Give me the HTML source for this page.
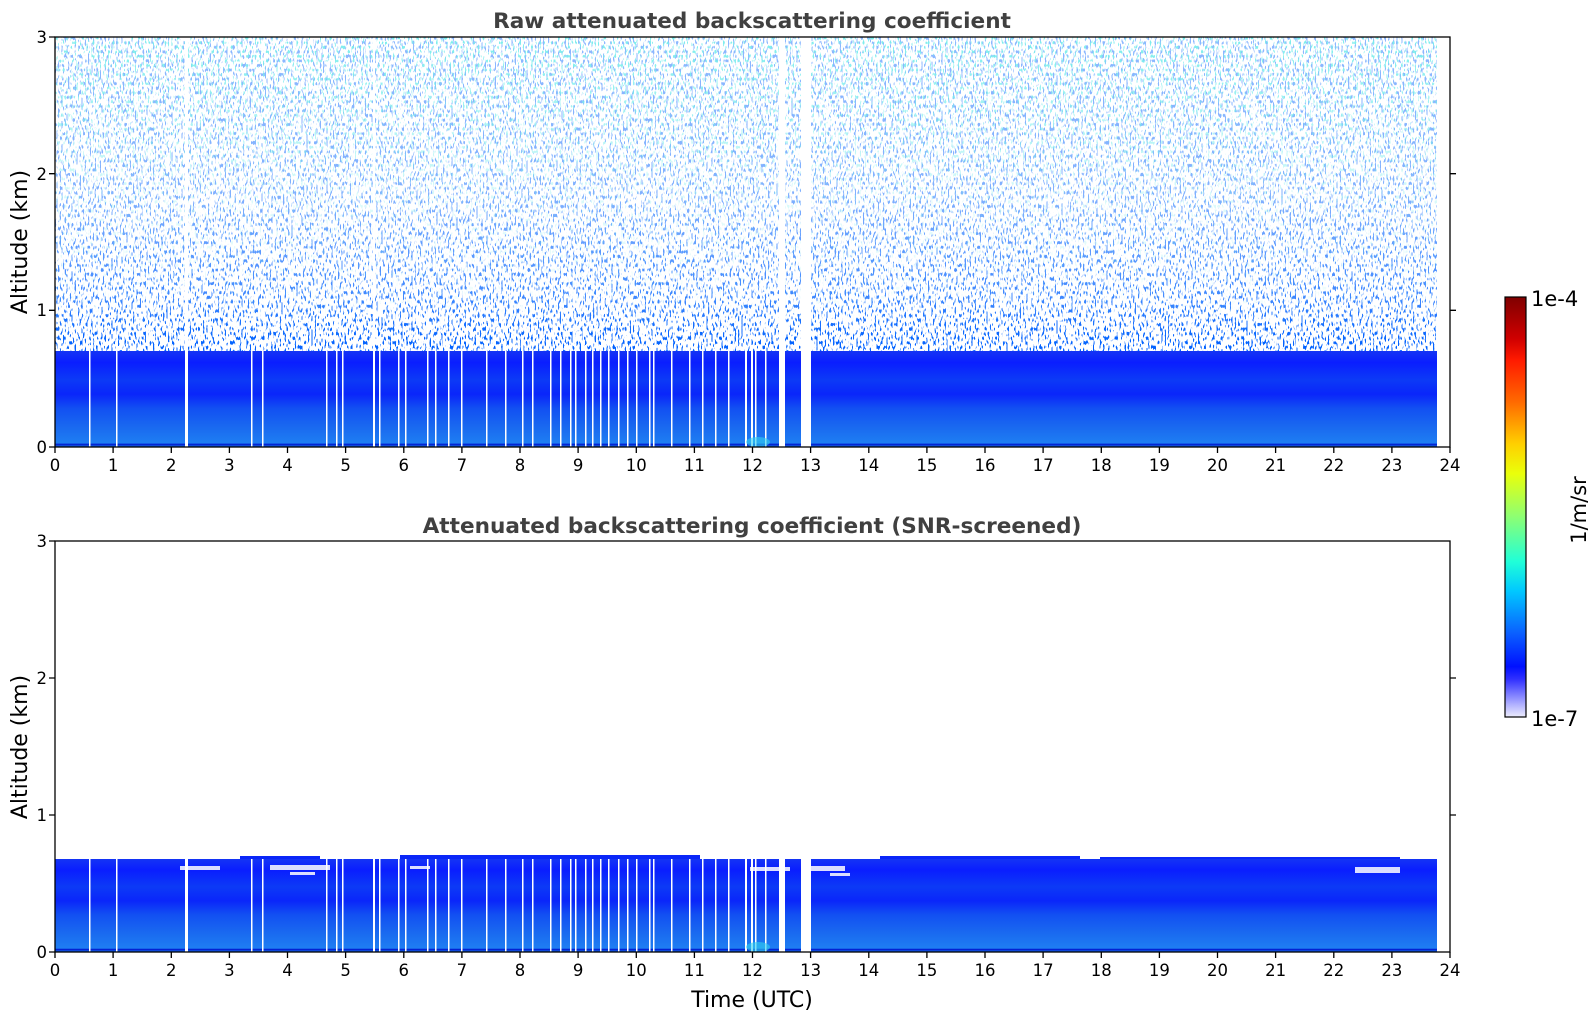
<!DOCTYPE html>
<html><head><meta charset="utf-8"><style>
html,body{margin:0;padding:0;background:#fff;}
svg{display:block;font-family:"DejaVu Sans","Liberation Sans",sans-serif;}
</style></head><body>
<svg width="1595" height="1020" viewBox="0 0 1595 1020" xmlns="http://www.w3.org/2000/svg">
<defs>
<filter id="nz" x="0" y="0" width="100%" height="100%">
<feTurbulence type="fractalNoise" baseFrequency="0.6 0.22" numOctaves="1" seed="4"/>
<feColorMatrix type="matrix" values="0 0 0 0 0.0  0 0 0 0 0.12  0 0 0 0 1  14 0 0 0 -7.9"/>
</filter>
<filter id="nz2" x="0" y="0" width="100%" height="100%">
<feTurbulence type="fractalNoise" baseFrequency="0.6 0.22" numOctaves="1" seed="11"/>
<feColorMatrix type="matrix" values="0 0 0 0 0.2  0 0 0 0 0.85  0 0 0 0 0.85  14 0 0 0 -8.4"/>
</filter>
<linearGradient id="mg" x1="0" y1="0" x2="0" y2="1">
<stop offset="0" stop-color="#fff" stop-opacity="0.45"/>
<stop offset="0.5" stop-color="#fff" stop-opacity="0.5"/>
<stop offset="0.8" stop-color="#fff" stop-opacity="0.75"/>
<stop offset="1" stop-color="#fff" stop-opacity="1"/>
</linearGradient>
<linearGradient id="mg2" x1="0" y1="0" x2="0" y2="1">
<stop offset="0" stop-color="#fff" stop-opacity="1"/>
<stop offset="0.5" stop-color="#fff" stop-opacity="0.3"/>
<stop offset="1" stop-color="#fff" stop-opacity="0"/>
</linearGradient>
<linearGradient id="mg3" x1="0" y1="0" x2="0" y2="1">
<stop offset="0" stop-color="#fff" stop-opacity="0"/>
<stop offset="0.85" stop-color="#fff" stop-opacity="0"/>
<stop offset="1" stop-color="#fff" stop-opacity="1"/>
</linearGradient>
<mask id="m1"><rect x="55" y="37" width="1382" height="320" fill="url(#mg)"/></mask>
<mask id="m2"><rect x="55" y="37" width="1382" height="320" fill="url(#mg2)"/></mask>
<mask id="m3"><rect x="55" y="37" width="1382" height="320" fill="url(#mg3)"/></mask>
<linearGradient id="band" x1="0" y1="0" x2="0" y2="1">
<stop offset="0" stop-color="#1434f4"/>
<stop offset="0.12" stop-color="#0a1eff"/>
<stop offset="0.3" stop-color="#0c3af6"/>
<stop offset="0.45" stop-color="#0a26fa"/>
<stop offset="0.6" stop-color="#1250f2"/>
<stop offset="0.8" stop-color="#1a6af0"/>
<stop offset="0.96" stop-color="#1e7ef2"/>
<stop offset="0.97" stop-color="#0018d0"/>
<stop offset="1" stop-color="#1c7ae8"/>
</linearGradient>
<linearGradient id="cb" x1="0" y1="0" x2="0" y2="1">
<stop offset="0" stop-color="#7f0000"/>
<stop offset="0.1" stop-color="#d00000"/>
<stop offset="0.15" stop-color="#ff1a00"/>
<stop offset="0.25" stop-color="#ff6a00"/>
<stop offset="0.35" stop-color="#ffd000"/>
<stop offset="0.42" stop-color="#eaff0a"/>
<stop offset="0.52" stop-color="#90ff70"/>
<stop offset="0.63" stop-color="#20ffd8"/>
<stop offset="0.7" stop-color="#00c8ff"/>
<stop offset="0.8" stop-color="#0a60ff"/>
<stop offset="0.88" stop-color="#0010ff"/>
<stop offset="0.91" stop-color="#3030ff"/>
<stop offset="0.94" stop-color="#7070ff"/>
<stop offset="0.97" stop-color="#b0b0ff"/>
<stop offset="1" stop-color="#ececfc"/>
</linearGradient>
</defs>

<!-- TOP PLOT -->
<g>
<rect x="55" y="37" width="1382" height="320" filter="url(#nz)" mask="url(#m1)"/>
<rect x="55" y="37" width="1382" height="320" filter="url(#nz)" mask="url(#m3)"/>
<rect x="55" y="37" width="1382" height="320" filter="url(#nz2)" mask="url(#m2)"/>
<rect x="55" y="351" width="1382" height="96" fill="url(#band)"/>
<g fill="#fff">
<rect x="89" y="345" width="1.5" height="102"/><rect x="116" y="345" width="1.5" height="102"/>
<rect x="185" y="37" width="3" height="410"/><rect x="251" y="345" width="1.5" height="102"/>
<rect x="262" y="345" width="1.5" height="102"/><rect x="326" y="345" width="1.5" height="102"/>
<rect x="336" y="345" width="1.5" height="102"/><rect x="342" y="345" width="1.5" height="102"/>
<rect x="373" y="37" width="2" height="410"/><rect x="379" y="345" width="1.5" height="102"/>
<rect x="398" y="345" width="1.5" height="102"/><rect x="405" y="345" width="1.5" height="102"/>
<rect x="427" y="345" width="1.5" height="102"/><rect x="435" y="345" width="1.5" height="102"/>
<rect x="448" y="345" width="1.5" height="102"/><rect x="461" y="345" width="1.5" height="102"/>
<rect x="486" y="345" width="1.5" height="102"/><rect x="505" y="345" width="1.5" height="102"/>
<rect x="522" y="345" width="1.5" height="102"/><rect x="532" y="345" width="1.5" height="102"/>
<rect x="550" y="345" width="1.5" height="102"/><rect x="560" y="345" width="1.5" height="102"/>
<rect x="570" y="345" width="1.5" height="102"/><rect x="575" y="345" width="1.5" height="102"/>
<rect x="585" y="345" width="1.5" height="102"/><rect x="592" y="345" width="1.5" height="102"/>
<rect x="600" y="345" width="1.5" height="102"/><rect x="608" y="345" width="1.5" height="102"/>
<rect x="618" y="345" width="1.5" height="102"/><rect x="627" y="345" width="1.5" height="102"/>
<rect x="636" y="345" width="1.5" height="102"/><rect x="649" y="345" width="1.5" height="102"/>
<rect x="653" y="345" width="1.5" height="102"/><rect x="671" y="345" width="1.5" height="102"/>
<rect x="689" y="345" width="1.5" height="102"/><rect x="702" y="345" width="1.5" height="102"/>
<rect x="715" y="345" width="1.5" height="102"/><rect x="728" y="345" width="1.5" height="102"/>
<rect x="745" y="345" width="2" height="102"/><rect x="751" y="345" width="2" height="102"/>
<rect x="755" y="345" width="1.5" height="102"/><rect x="765" y="345" width="1.5" height="102"/>
<rect x="779" y="37" width="6" height="410"/><rect x="801" y="37" width="10" height="410"/>
</g>
<ellipse cx="758" cy="442" rx="12" ry="5" fill="#30d0f0" opacity="0.6"/>
</g>

<!-- BOTTOM PLOT -->
<g>
<rect x="55" y="859" width="1382" height="93" fill="url(#band)"/>
<g fill="#0a26f8">
<rect x="240" y="856" width="80" height="3"/><rect x="400" y="855" width="300" height="4"/><rect x="880" y="856" width="200" height="3"/><rect x="1100" y="857" width="300" height="2"/>
</g>
<g fill="#fff" opacity="0.85">
<rect x="180" y="866" width="40" height="4"/><rect x="270" y="865" width="60" height="5"/><rect x="290" y="872" width="25" height="3"/><rect x="410" y="866" width="20" height="3"/>
<rect x="750" y="867" width="40" height="4"/><rect x="810" y="866" width="35" height="5"/><rect x="830" y="873" width="20" height="3"/>
<rect x="1355" y="867" width="45" height="6"/>
</g>
<g fill="#fff">
<rect x="89" y="859" width="1.5" height="93"/><rect x="116" y="859" width="1.5" height="93"/>
<rect x="185" y="859" width="3" height="93"/><rect x="251" y="859" width="1.5" height="93"/>
<rect x="262" y="859" width="1.5" height="93"/><rect x="326" y="859" width="1.5" height="93"/>
<rect x="336" y="859" width="1.5" height="93"/><rect x="342" y="859" width="1.5" height="93"/>
<rect x="373" y="859" width="2" height="93"/><rect x="379" y="859" width="1.5" height="93"/>
<rect x="398" y="859" width="1.5" height="93"/><rect x="405" y="859" width="1.5" height="93"/>
<rect x="427" y="859" width="1.5" height="93"/><rect x="435" y="859" width="1.5" height="93"/>
<rect x="448" y="859" width="1.5" height="93"/><rect x="461" y="859" width="1.5" height="93"/>
<rect x="486" y="859" width="1.5" height="93"/><rect x="505" y="859" width="1.5" height="93"/>
<rect x="522" y="859" width="1.5" height="93"/><rect x="532" y="859" width="1.5" height="93"/>
<rect x="550" y="859" width="1.5" height="93"/><rect x="560" y="859" width="1.5" height="93"/>
<rect x="570" y="859" width="1.5" height="93"/><rect x="575" y="859" width="1.5" height="93"/>
<rect x="585" y="859" width="1.5" height="93"/><rect x="592" y="859" width="1.5" height="93"/>
<rect x="600" y="859" width="1.5" height="93"/><rect x="608" y="859" width="1.5" height="93"/>
<rect x="618" y="859" width="1.5" height="93"/><rect x="627" y="859" width="1.5" height="93"/>
<rect x="636" y="859" width="1.5" height="93"/><rect x="649" y="859" width="1.5" height="93"/>
<rect x="653" y="859" width="1.5" height="93"/><rect x="671" y="859" width="1.5" height="93"/>
<rect x="689" y="859" width="1.5" height="93"/><rect x="702" y="859" width="1.5" height="93"/>
<rect x="715" y="859" width="1.5" height="93"/><rect x="728" y="859" width="1.5" height="93"/>
<rect x="745" y="859" width="2" height="93"/><rect x="751" y="859" width="2" height="93"/>
<rect x="755" y="859" width="1.5" height="93"/><rect x="765" y="859" width="1.5" height="93"/>
<rect x="779" y="855" width="6" height="97"/><rect x="801" y="855" width="10" height="97"/>
</g>
<ellipse cx="758" cy="947" rx="12" ry="5" fill="#30d0f0" opacity="0.6"/>
</g>

<!-- AXES -->
<g fill="none" stroke="#000" stroke-width="1.3">
<rect x="55" y="37" width="1395" height="410"/>
<rect x="55" y="541" width="1395" height="411"/>
<path d="M55 447v6M113.1 447v6M171.3 447v6M229.4 447v6M287.5 447v6M345.6 447v6M403.8 447v6M461.9 447v6M520 447v6M578.1 447v6M636.3 447v6M694.4 447v6M752.5 447v6M810.6 447v6M868.8 447v6M926.9 447v6M985 447v6M1043.1 447v6M1101.3 447v6M1159.4 447v6M1217.5 447v6M1275.6 447v6M1333.8 447v6M1391.9 447v6M1450 447v6"/>
<path d="M55 952v6M113.1 952v6M171.3 952v6M229.4 952v6M287.5 952v6M345.6 952v6M403.8 952v6M461.9 952v6M520 952v6M578.1 952v6M636.3 952v6M694.4 952v6M752.5 952v6M810.6 952v6M868.8 952v6M926.9 952v6M985 952v6M1043.1 952v6M1101.3 952v6M1159.4 952v6M1217.5 952v6M1275.6 952v6M1333.8 952v6M1391.9 952v6M1450 952v6"/>
<path d="M49 447h6M49 310.3h6M49 173.7h6M49 37h6M1450 310.3h6M1450 173.7h6"/>
<path d="M49 952h6M49 815h6M49 678h6M49 541h6M1450 815h6M1450 678h6"/>
</g>
<g font-size="16.5" text-anchor="middle" fill="#000">
<text x="55" y="471">0</text><text x="113.1" y="471">1</text><text x="171.3" y="471">2</text><text x="229.4" y="471">3</text><text x="287.5" y="471">4</text><text x="345.6" y="471">5</text><text x="403.8" y="471">6</text><text x="461.9" y="471">7</text><text x="520" y="471">8</text><text x="578.1" y="471">9</text><text x="636.3" y="471">10</text><text x="694.4" y="471">11</text><text x="752.5" y="471">12</text><text x="810.6" y="471">13</text><text x="868.8" y="471">14</text><text x="926.9" y="471">15</text><text x="985" y="471">16</text><text x="1043.1" y="471">17</text><text x="1101.3" y="471">18</text><text x="1159.4" y="471">19</text><text x="1217.5" y="471">20</text><text x="1275.6" y="471">21</text><text x="1333.8" y="471">22</text><text x="1391.9" y="471">23</text><text x="1450" y="471">24</text>
<text x="55" y="976">0</text><text x="113.1" y="976">1</text><text x="171.3" y="976">2</text><text x="229.4" y="976">3</text><text x="287.5" y="976">4</text><text x="345.6" y="976">5</text><text x="403.8" y="976">6</text><text x="461.9" y="976">7</text><text x="520" y="976">8</text><text x="578.1" y="976">9</text><text x="636.3" y="976">10</text><text x="694.4" y="976">11</text><text x="752.5" y="976">12</text><text x="810.6" y="976">13</text><text x="868.8" y="976">14</text><text x="926.9" y="976">15</text><text x="985" y="976">16</text><text x="1043.1" y="976">17</text><text x="1101.3" y="976">18</text><text x="1159.4" y="976">19</text><text x="1217.5" y="976">20</text><text x="1275.6" y="976">21</text><text x="1333.8" y="976">22</text><text x="1391.9" y="976">23</text><text x="1450" y="976">24</text>
</g>
<g font-size="16.5" text-anchor="end" fill="#000">
<text x="47" y="453">0</text><text x="47" y="316">1</text><text x="47" y="180">2</text><text x="47" y="43">3</text>
<text x="47" y="958">0</text><text x="47" y="821">1</text><text x="47" y="684">2</text><text x="47" y="547">3</text>
</g>
<g font-size="22" text-anchor="middle" fill="#000">
<text transform="translate(27,242) rotate(-90)">Altitude (km)</text>
<text transform="translate(27,747) rotate(-90)">Altitude (km)</text>
<text x="752" y="1007">Time (UTC)</text>
</g>
<g font-size="21.6" font-weight="bold" text-anchor="middle" fill="#404040">
<text x="752" y="28">Raw attenuated backscattering coefficient</text>
<text x="752" y="533">Attenuated backscattering coefficient (SNR-screened)</text>
</g>

<!-- COLORBAR -->
<rect x="1505" y="297" width="21" height="420" fill="url(#cb)" stroke="#000" stroke-width="1.2"/>
<g font-size="21" fill="#000">
<text x="1531" y="306">1e-4</text>
<text x="1531" y="726">1e-7</text>
<text transform="translate(1586,510) rotate(-90)" text-anchor="middle">1/m/sr</text>
</g>
</svg>
</body></html>
